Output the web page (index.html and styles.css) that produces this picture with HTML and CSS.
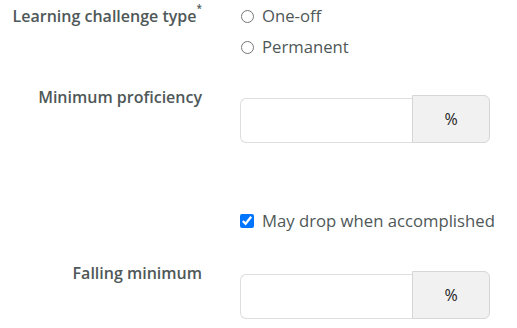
FILE: index.html
```html
<!DOCTYPE html>
<html lang="en">
<head>
<meta charset="utf-8">
<title>Learning challenge</title>
<link rel="stylesheet" href="styles.css">
</head>
<body>
<form class="form">
  <div class="row row-type">
    <div class="label">Learning challenge type<sup class="req">*</sup></div>
    <div class="field radios">
      <label class="radio"><input type="radio" name="type"><span>One-off</span></label>
      <label class="radio"><input type="radio" name="type"><span>Permanent</span></label>
    </div>
  </div>
  <div class="row row-min">
    <div class="label">Minimum proficiency</div>
    <div class="field">
      <div class="group">
        <input class="num" type="text">
        <span class="addon">%</span>
      </div>
    </div>
  </div>
  <div class="row row-check">
    <div class="label"></div>
    <div class="field">
      <label class="check"><input type="checkbox" checked><span>May drop when accomplished</span></label>
    </div>
  </div>
  <div class="row row-fall">
    <div class="label">Falling minimum</div>
    <div class="field">
      <div class="group">
        <input class="num" type="text">
        <span class="addon">%</span>
      </div>
    </div>
  </div>
</form>
</body>
</html>
```
FILE: styles.css
```css
html, body {
  margin: 0;
  padding: 0;
  background: #ffffff;
}
body {
  font-family: "Open Sans", "Noto Sans", "Liberation Sans", sans-serif;
  color: #4f5858;
  font-size: 16px;
}
.form {
  display: flex;
  flex-direction: column;
  padding-top: 5px;
}
.row {
  display: grid;
  grid-template-columns: 202px 1fr;
  column-gap: 38px;
}
.label {
  text-align: right;
  font-weight: 600;
  font-size: 16px;
  line-height: 22px;
}
.req {
  font-size: 10px;
  vertical-align: top;
  line-height: 10px;
  position: relative;
  top: -2px;
}
.radios {
  display: flex;
  flex-direction: column;
  gap: 9px;
}
.radio, .check {
  display: flex;
  align-items: center;
  gap: 8px;
  line-height: 22px;
  font-size: 16.7px;
}
.radio input {
  width: 13px;
  height: 13px;
  margin: 0 0 0 1px;
  accent-color: #0075ff;
}
.check input {
  width: 14px;
  height: 14px;
  margin: 0;
  accent-color: #0075ff;
}
.row-min {
  margin-top: 28px;
}
.row-min .field {
  margin-top: 9px;
}
.row-check {
  margin-top: 67px;
}
.row-fall {
  margin-top: 30px;
}
.row-fall .field {
  margin-top: 9px;
}
.group {
  display: flex;
  align-items: flex-end;
  width: 250px;
}
.num {
  box-sizing: border-box;
  width: 172px;
  height: 45px;
  border: 1px solid #dedede;
  border-right: none;
  border-radius: 6px 0 0 6px;
  padding: 0 10px;
  font: inherit;
  outline: none;
}
.addon {
  box-sizing: border-box;
  width: 78px;
  height: 48px;
  display: flex;
  align-items: center;
  justify-content: center;
  background: #f1f1f1;
  border: 1px solid #d6d6d6;
  border-radius: 0 6px 6px 0;
  color: #222;
  font-size: 16px;
}
```
